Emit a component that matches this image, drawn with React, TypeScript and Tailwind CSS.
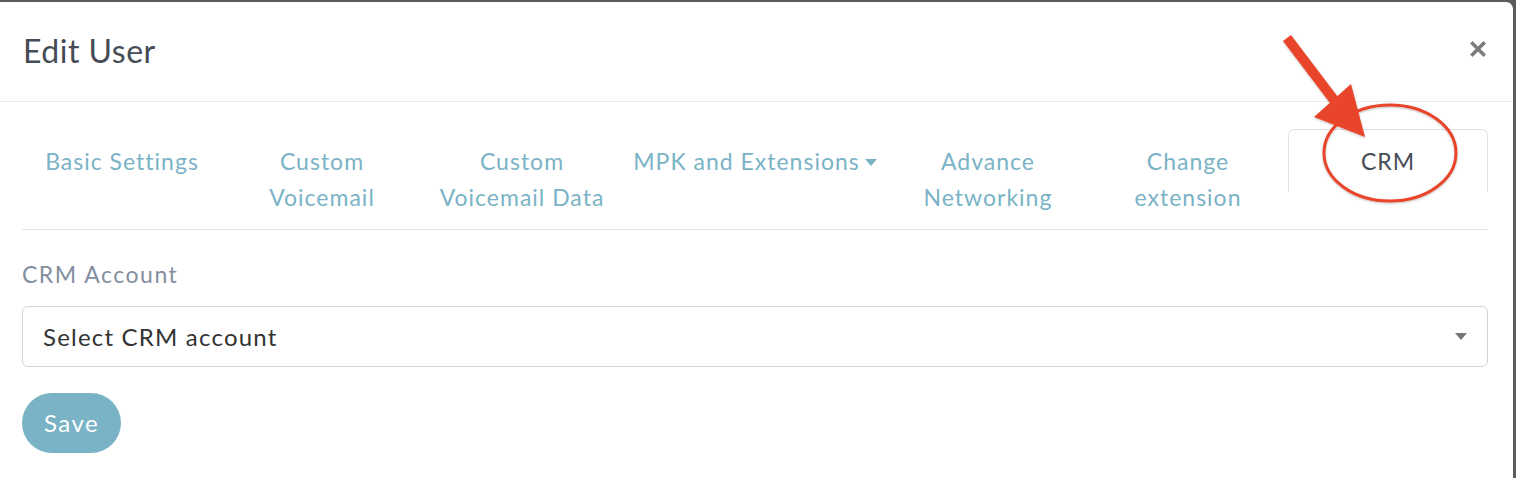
import { ReactNode } from "react"

type Tab = { label: ReactNode; width: string; active?: boolean; caret?: boolean }

const tabs: Tab[] = [
  { label: "Basic Settings", width: "w-[200px]" },
  { label: <>Custom<br />Voicemail</>, width: "w-[200px]" },
  { label: <>Custom<br />Voicemail Data</>, width: "w-[200px]" },
  { label: "MPK and Extensions", width: "w-[266px]", caret: true },
  { label: <>Advance<br />Networking</>, width: "w-[200px]" },
  { label: <>Change<br />extension</>, width: "w-[200px]" },
  { label: "CRM", width: "w-[200px]", active: true },
]

function Annotation() {
  return (
    <svg className="pointer-events-none absolute left-0 top-0" width="1516" height="478">
      <defs>
        <filter id="sh" x="-20%" y="-20%" width="140%" height="140%">
          <feDropShadow dx="0" dy="1" stdDeviation="1.2" floodColor="#000" floodOpacity="0.25" />
        </filter>
      </defs>
      <g filter="url(#sh)">
        <ellipse cx="1390" cy="153" rx="66" ry="48" fill="none" stroke="#e8442b" strokeWidth="3" />
        <line x1="1287" y1="38" x2="1334" y2="100" stroke="#e8442b" strokeWidth="10" />
        <polygon points="1314,117 1351,84 1365,137" fill="#e8442b" />
      </g>
    </svg>
  )
}

export default function App() {
  return (
    <div className="relative h-[478px] w-[1516px] overflow-hidden bg-[#5c5c5c] font-['Lato',sans-serif]">
      <div className="mr-[3px] mt-[2px] h-[476px] rounded-tr-[7px] bg-white">
        <div className="flex h-[100px] items-center justify-between border-b border-[#e9ecef] pl-[23px] pr-[27px]">
          <h1 className="pb-[2px] text-[32px] font-normal tracking-[0.5px] text-[#454c56]">Edit User</h1>
          <svg width="16" height="16" viewBox="0 0 16 16" className="mb-[6px]">
            <path d="M2.5 2.5 L13.5 13.5 M13.5 2.5 L2.5 13.5" stroke="#7a7a7a" strokeWidth="3.4" strokeLinecap="square" />
          </svg>
        </div>

        <div className="px-[22px] pt-[27px]">
          <div className="flex w-[1466px] items-start border-b border-[#dee2e6]">
            {tabs.map((t, i) => (
              <div
                key={i}
                className={
                  t.active
                    ? `${t.width} -mb-px rounded-t-[6px] border border-b-0 border-[#dee2e6] px-1 pb-[13px] pt-[13px] text-center text-[23px] leading-[36px] tracking-[1px] text-[#454c56]`
                    : `${t.width} border border-transparent px-1 pb-[13px] pt-[13px] text-center text-[23px] leading-[36px] tracking-[1px] text-[#7ab3c6]`
                }
              >
                {t.label}
                {t.caret && (
                  <span className="ml-[5px] inline-block border-x-[6px] border-t-[7px] border-x-transparent border-t-[#7ab3c6] align-[4px]" />
                )}
              </div>
            ))}
          </div>

          <div className="mt-[28px] text-[23px] leading-[33px] tracking-[1.5px] text-[#838fa0]">CRM Account</div>

          <div className="mt-[15px] flex h-[61px] w-[1466px] items-center justify-between rounded-[6px] border border-[#ced4da] pl-[20px] pr-[20px]">
            <span className="text-[24px] tracking-[1.2px] text-[#333]">Select CRM account</span>
            <span className="inline-block border-x-[6px] border-t-[7px] border-x-transparent border-t-[#777]" />
          </div>

          <button className="mt-[26px] h-[60px] w-[99px] rounded-full bg-[#7ab3c6] text-[24px] tracking-[1.5px] text-white">
            Save
          </button>
        </div>
      </div>
      <Annotation />
    </div>
  )
}
